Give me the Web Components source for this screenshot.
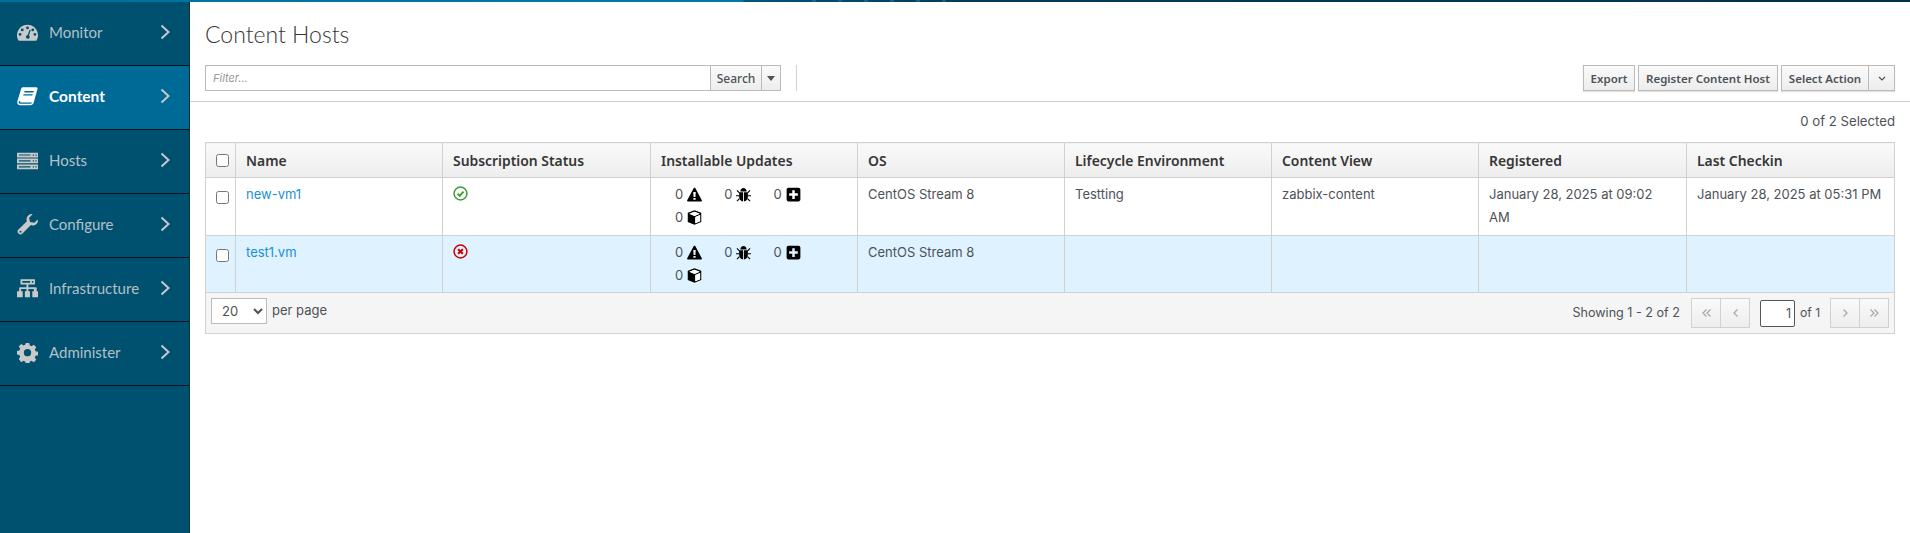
<!DOCTYPE html>
<html>
<head>
<meta charset="utf-8">
<title>Content Hosts</title>
<style>
  html, body { margin: 0; height: 100%; background: #fff; }
  body { font-family: "Inter", "Liberation Sans", sans-serif; color: #363636; overflow: hidden; }
</style>
</head>
<body>
<app-shell>
  <side-nav slot="nav">
    <nav-item icon="gauge" label="Monitor"></nav-item>
    <nav-item icon="book" label="Content" active></nav-item>
    <nav-item icon="server" label="Hosts"></nav-item>
    <nav-item icon="wrench" label="Configure"></nav-item>
    <nav-item icon="sitemap" label="Infrastructure"></nav-item>
    <nav-item icon="cog" label="Administer"></nav-item>
  </side-nav>
  <page-header title-text="Content Hosts"></page-header>
  <selection-count>0 of 2 Selected</selection-count>
  <hosts-table></hosts-table>
</app-shell>

<script>
// icon paths, all on a 24x24 box
const NAV_ICONS = {
  gauge: '<path fill-rule="evenodd" d="M12 3C5.400 3 0 8.400 0 15c0 2.200.6 4.300 1.700 6 .2.300.5.500.9.500h18.800c.4 0 .7-.2.900-.5 1.100-1.700 1.700-3.800 1.700-6 0-6.600-5.400-12-12-12zM12 5.200a1.600 1.600 0 1 1 0 3.200 1.600 1.600 0 0 1 0-3.200zM6 7.400a1.600 1.600 0 1 1 0 3.200 1.600 1.600 0 0 1 0-3.200zM3.500 12.600a1.600 1.600 0 1 1 0 3.200 1.600 1.600 0 0 1 0-3.200zM20.500 12.600a1.600 1.600 0 1 1 0 3.200 1.600 1.600 0 0 1 0-3.200zM18 7.400a1.600 1.600 0 1 1 0 3.200 1.600 1.600 0 0 1 0-3.200zM14.400 8.800l1.300.4-2 6.200c.6.500.9 1.200.8 2-.2 1.200-1.300 2-2.500 1.800-1.200-.2-2-1.300-1.800-2.500.2-1 1-1.700 2-1.800z"/>',
  book: '<path fill-rule="evenodd" d="M7 1.500h15.200c1 0 1.500.9 1.200 1.800l-4.300 15.600c-.6 2-2 3.100-4 3.100H3.600C1.500 22 0 20.500.3 18.100c0-.3.1-.6.2-.9L4.700 3.400C5 2.300 5.900 1.500 7 1.500zM8.700 5.700l-.5 1.600h10.500l.5-1.600zM7.500 9.300l-.5 1.600h10.500l.5-1.600zM3.700 17c-1.300 0-2 .8-1.900 1.700.1.900.8 1.700 2 1.700h11.300c1 0 1.800-.5 2.300-1.700.1-.2.100-.3.200-.5-.5.400-1.100.6-1.800.6H3.700z"/>',
  server: '<path fill-rule="evenodd" d="M0 3h24v5.500H0zM0 9.700h24v5.500H0zM0 16.500h24V22H0zM2 5v1.400h13.500V5zM2 11.700v1.400h13.500v-1.400zM2 18.500v1.400h13.500v-1.400zM18 5v1.500h1.500V5zM21 5v1.500h1.500V5zM18 11.700v1.500h1.500v-1.500zM21 11.700v1.500h1.500v-1.500zM18 18.500V20h1.500v-1.500zM21 18.500V20h1.500v-1.500z"/>',
  wrench: '<path fill-rule="evenodd" d="M23.800 6.300c.3 1.800-.2 3.700-1.600 5.100-1.700 1.700-4.200 2.100-6.300 1.300L6 22.700c-1.100 1.100-2.900 1.100-4 0l-.6-.6c-1.100-1.100-1.100-2.900 0-4l9.900-9.900c-.8-2.100-.4-4.600 1.300-6.300C14 .5 16-.1 17.800.2l-4 4 1 4.800 4.900 1.100zM4 19a1.200 1.200 0 1 0 0 2.400A1.200 1.200 0 0 0 4 19z"/>',
  sitemap: '<path fill-rule="evenodd" d="M4 1.500h16.500v6H13v3h8.500c.6 0 1 .4 1 1V15h1.500v7h-6.500v-7h1.800v-2.300H13V15h1.800v7H9v-7h1.800v-2.300H4.700V15h1.800v7H0v-7h2.500v-3.500c0-.6.400-1 1-1h7.300v-3H4zM6 3.300v2h9v-2zM17 3.300v2h1.700v-2z"/>',
  cog: '<path fill-rule="evenodd" d="M10 1h4l.6 3c.7.200 1.400.5 2 .900l2.600-1.700 2.800 2.800-1.700 2.600c.4.600.7 1.300.9 2l3 .6v4l-3 .6c-.2.700-.5 1.400-.9 2l1.700 2.600-2.800 2.800-2.600-1.700c-.6.400-1.300.7-2 .9l-.6 3h-4l-.6-3c-.7-.2-1.400-.5-2-.9l-2.600 1.700L2 19.400l1.700-2.600c-.4-.6-.7-1.300-.9-2l-3-.6v-4l3-.6c.2-.7.500-1.400.9-2L2 5l2.800-2.800 2.600 1.700c.6-.4 1.300-.7 2-.9zM12 8a4.200 4.200 0 1 0 0 8.400A4.200 4.200 0 0 0 12 8z"/>'
};

const APP_ICONS = {
  warn: '<path fill-rule="evenodd" d="M12 1c.5 0 .9.200 1.200.7l10.500 19.500c.5 1-.1 1.800-1.200 1.800h-21c-1.100 0-1.700-.8-1.200-1.800L10.800 1.700c.3-.5.700-.7 1.200-.7zM10 8l.5 8h3l.5-8zM10.200 17.500v3h3.600v-3z"/>',
  bug: '<path d="M7 7c0-3 2.200-5.500 5-5.500S17 4 17 7zM5.500 8.500h5.800V23C7.500 22.500 5 19.500 5 15.500v-6c0-.3.2-1 .5-1zM12.700 8.500h5.800c.3 0 .5.700.5 1v6c0 4-2.500 7-6.300 7.500z"/><path d="M1.500 5.500 5.500 9.500M22.500 5.500l-4 4M0 14h5M19 14h5M1.500 22.500l4-4M22.500 22.500l-4-4" stroke="#000" stroke-width="1.800" fill="none"/>',
  plus: '<path fill-rule="evenodd" d="M4 1h16c1.700 0 3 1.300 3 3v16c0 1.700-1.300 3-3 3H4c-1.700 0-3-1.300-3-3V4c0-1.700 1.300-3 3-3zM10 5v5H5v4h5v5h4v-5h5v-4h-5V5z"/>',
  cube: '<path fill-rule="evenodd" d="M12 .5l10.800 4v14.600L12 23.500 1.200 19.100V4.500zM12 2.600L3.800 6 12 9.400 20.200 6zM13.300 11v10l7.700-3.200V7.800z" fill="#000"/><path d="M12 2.600 3.800 6 12 9.400 20.200 6zM13.300 11v10l7.700-3.200V7.800z" fill="#fff"/>'
};

// app frame: top strip, side nav and main column
class AppShell extends HTMLElement {
  constructor() {
    super();
    this.attachShadow({ mode: 'open' }).innerHTML = `
<style>
  :host { display: grid; grid-template-columns: 190px 1fr; grid-template-rows: 2px 1fr; height: 100vh; }
  .strip { grid-column: 1 / 3;
    background:
      repeating-linear-gradient(90deg, transparent 0 22px, rgba(30,125,175,.55) 22px 26px) 790px 0 / 160px 100% no-repeat,
      linear-gradient(90deg, #00709c 0, #0079a9 743px, #00557c 744px, #003a58 950px, #00354f 100%); }
  main { min-width: 0; display: flex; flex-direction: column; }
</style>
<div class="strip"></div>
<slot name="nav"></slot>
<main><slot></slot></main>`;
  }
}
customElements.define('app-shell', AppShell);

class SideNav extends HTMLElement {
  constructor() {
    super();
    this.attachShadow({ mode: 'open' }).innerHTML = `
<style>
  :host { display: block; background: #00506f; border-right: 1px solid #1c2b33; box-sizing: border-box; }
</style>
<slot></slot>`;
  }
}
customElements.define('side-nav', SideNav);

class NavItem extends HTMLElement {
  connectedCallback() {
    const icon = NAV_ICONS[this.getAttribute('icon')];
    this.attachShadow({ mode: 'open' }).innerHTML = `
<style>
  :host { display: flex; align-items: center; box-sizing: border-box; height: 64px; padding: 0 19px 3px 17px;
    border-bottom: 1px solid #03131c; font: 400 15px "Lato", sans-serif; color: #b4c1c7; }
  :host([active]) { background: #006a96; color: #fff; font-weight: 700; }
  .icon { width: 21px; height: 21px; fill: #c9c9c9; flex: none; }
  :host([active]) .icon { fill: #fff; }
  .label { margin-left: 11px; flex: 1; }
  :host([active]) .label { font-size: 15.500px; }
  .chev { width: 10px; height: 16px; fill: none; stroke: #c4c9cc; stroke-width: 2; flex: none; }
</style>
<svg class="icon" viewBox="0 0 24 24">${icon}</svg>
<span class="label">${this.getAttribute('label')}</span>
<svg class="chev" viewBox="0 0 10 16"><path d="M1.500 1.500 8.500 8l-7 6.500"/></svg>`;
  }
}
customElements.define('nav-item', NavItem);

class PfButton extends HTMLElement {
  constructor() {
    super();
    this.attachShadow({ mode: 'open' }).innerHTML = `
<style>
  :host { display: inline-flex; align-items: center; justify-content: center; box-sizing: border-box; height: 26px;
    padding: 0 6px; border: 1px solid #bbb; background: linear-gradient(#fafafa, #ededed);
    font: 600 11.500px "Noto Sans", sans-serif; color: #4d5258; white-space: nowrap; }
</style>
<slot></slot>`;
  }
}
customElements.define('pf-button', PfButton);

class PageHeader extends HTMLElement {
  connectedCallback() {
    this.attachShadow({ mode: 'open' }).innerHTML = `
<style>
  :host { display: block; padding: 0 15px; height: 99px; border-bottom: 1px solid #d1d1d1; }
  h1 { margin: 0; padding-top: 20px; height: 63px; box-sizing: border-box; font: 300 23px/24px "Lato", sans-serif; color: #363636; }
  .bar { display: flex; align-items: stretch; height: 26px; }
  .search { display: flex; width: 576px; box-sizing: border-box; border: 1px solid #bbb; }
  .filter { flex: 1; padding-left: 7px; font: italic 400 11px/24px "Inter", sans-serif; color: #999; }
  .search pf-button { border-width: 0 0 0 1px; height: 24px; }
  .sep { width: 1px; background: #d1d1d1; margin-left: 15px; }
  .actions { margin-left: auto; display: flex; gap: 3px; }
  .group { display: flex; }
  .group pf-button + pf-button { border-left: 0; width: 26px; padding: 0; }
  pf-button.raised, .group { box-shadow: 0 1px 1px rgba(3,3,3,.12); }
  .caret { width: 0; height: 0; border: 4px solid transparent; border-top: 5px solid #4d5258; border-bottom: 0; }
  .chev { width: 8px; height: 5px; fill: none; stroke: #4d5258; stroke-width: 1.200; }
</style>
<h1>${this.getAttribute('title-text')}</h1>
<div class="bar">
  <div class="search">
    <div class="filter">Filter...</div>
    <pf-button style="width:51px;font-size:12px;font-weight:500">Search</pf-button>
    <pf-button style="width:19px;padding:0"><span class="caret"></span></pf-button>
  </div>
  <div class="sep"></div>
  <div class="actions">
    <pf-button class="raised" style="width:52px">Export</pf-button>
    <pf-button class="raised" style="width:140px">Register Content Host</pf-button>
    <div class="group">
      <pf-button style="width:88px">Select Action</pf-button>
      <pf-button><svg class="chev" viewBox="0 0 8 5"><path d="M1 1l3 3 3-3"/></svg></pf-button>
    </div>
  </div>
</div>`;
  }
}
customElements.define('page-header', PageHeader);

class SelectionCount extends HTMLElement {
  constructor() {
    super();
    this.attachShadow({ mode: 'open' }).innerHTML = `
<style>
  :host { display: block; height: 40px; padding: 9px 15px 0 0; box-sizing: border-box; text-align: right; font: 400 13.200px/20px "Inter", sans-serif; color: #4d5258; }
</style>
<slot></slot>`;
  }
}
customElements.define('selection-count', SelectionCount);

// one counter with its icon inside the Installable Updates cell
class UpdateCount extends HTMLElement {
  connectedCallback() {
    this.attachShadow({ mode: 'open' }).innerHTML = `
<style>
  :host { display: inline-flex; align-items: center; width: 49.300px; height: 23px; vertical-align: top; }
  span { width: 10px; text-align: center; }
  svg { width: 15px; height: 15px; margin-left: 3px; fill: #000; }
</style>
<span>0</span><svg viewBox="0 0 24 24">${APP_ICONS[this.getAttribute('icon')]}</svg>`;
  }
}
customElements.define('update-count', UpdateCount);

class StatusIcon extends HTMLElement {
  connectedCallback() {
    const ok = this.getAttribute('state') === 'ok';
    const mark = ok
      ? '<path d="M4.300 7.200 6.300 9.200 9.800 5.200" stroke="#3f9c35" stroke-width="1.800" fill="none"/>'
      : '<path d="M4.800 4.800 9.200 9.200M9.200 4.800 4.800 9.200" stroke="#cc0000" stroke-width="2" fill="none"/>';
    this.attachShadow({ mode: 'open' }).innerHTML = `
<style>
  :host { display: block; width: 15px; height: 15px; }
  svg { display: block; width: 15px; height: 15px; }
</style>
<svg viewBox="0 0 14 14"><circle cx="7" cy="7" r="6" fill="none" stroke="${ok ? '#3f9c35' : '#cc0000'}" stroke-width="1.400"/>${mark}</svg>`;
  }
}
customElements.define('status-icon', StatusIcon);

const HOSTS = [
  { name: 'new-vm1', state: 'ok', os: 'CentOS Stream 8', env: 'Testting', view: 'zabbix-content',
    registered: 'January 28, 2025 at 09:02 AM', checkin: 'January 28, 2025 at 05:31 PM' },
  { name: 'test1.vm', state: 'bad', os: 'CentOS Stream 8', env: '', view: '', registered: '', checkin: '', selected: true }
];

class HostsTable extends HTMLElement {
  connectedCallback() {
    const rows = HOSTS.map(h => `
      <tr class="${h.selected ? 'sel' : ''}">
        <td class="chk"><input type="checkbox"></td>
        <td><a href="#">${h.name}</a></td>
        <td><status-icon state="${h.state}"></status-icon></td>
        <td class="upd"><update-count icon="warn"></update-count><update-count icon="bug"></update-count><update-count icon="plus"></update-count><update-count icon="cube"></update-count></td>
        <td>${h.os}</td>
        <td>${h.env}</td>
        <td>${h.view}</td>
        <td class="wrap">${h.registered}</td>
        <td class="nw">${h.checkin}</td>
      </tr>`).join('');

    this.attachShadow({ mode: 'open' }).innerHTML = `
<style>
  :host { display: block; margin: 0 15px; font: 400 13px/23px "Inter", sans-serif; color: #4d5258; }
  table { width: 100%; table-layout: fixed; border-collapse: collapse; }
  th, td { border: 1px solid #d1d1d1; text-align: left; vertical-align: top; }
  th { height: 34px; padding: 0 10px; vertical-align: middle; background: linear-gradient(#fafafa, #ededed);
    font: 600 13.900px "Noto Sans", sans-serif; color: #363636; }
  td { padding: 5px 10px 6px; line-height: 23px; height: 46px; box-sizing: content-box; }
  tr.sel td { background: #def3ff; padding-bottom: 5px; }
  td > status-icon { margin-top: 3px; }
  td.chk { padding: 0 0 0 5px; }
  th.chk { padding: 0 0 0 5px; }
  input[type=checkbox] { width: 13px; height: 13px; margin: 13px 0 0 5px; display: block; }
  th input[type=checkbox] { margin-top: 0; }
  a { color: #1b8fd6; text-decoration: none; }
  .upd { padding-left: 23px; padding-right: 0; }
  .wrap { padding-right: 22px; }
  .nw { white-space: nowrap; padding-right: 0; }
  .foot { display: flex; align-items: flex-start; height: 41px; box-sizing: border-box; padding: 5px 5px 0;
    background: #f5f5f5; border: 1px solid #d1d1d1; border-top: 0; }
  select { width: 56px; height: 26px; font: 400 13px "Inter", sans-serif; color: #4d5258; background: #fff; border: 1px solid #bbb; padding-left: 6px; }
  .per { margin-left: 5px; line-height: 24px; }
  .show { margin-left: auto; line-height: 30px; font-size: 12.600px; }
  .pager { display: flex; height: 30px; border: 1px solid #d1d1d1; box-sizing: border-box; background: linear-gradient(#fafafa, #ededed); }
  .pager span { width: 28px; display: flex; align-items: center; justify-content: center; }
  .pager span + span { border-left: 1px solid #d1d1d1; }
  .pager svg { height: 8px; fill: none; stroke: #a3a6a9; stroke-width: 1.200; }
  .num { width: 35px; height: 27px; box-sizing: border-box; border: 1px solid #555; border-radius: 2px; margin: 2px 0 0 10px; background: #fff; text-align: right; padding-right: 3px; line-height: 25px; font-size: 12.600px; }
  .of { width: 20px; margin: 0 10px 0 5px; line-height: 30px; font-size: 12.200px; white-space: nowrap; }
</style>
<table>
  <colgroup>
    <col style="width:30px"><col style="width:207px"><col style="width:208px"><col style="width:207px">
    <col style="width:207px"><col style="width:207px"><col style="width:207px"><col style="width:208px"><col style="width:208px">
  </colgroup>
  <thead>
    <tr>
      <th class="chk"><input type="checkbox"></th>
      <th>Name</th><th>Subscription Status</th><th>Installable Updates</th><th>OS</th>
      <th>Lifecycle Environment</th><th>Content View</th><th>Registered</th><th>Last Checkin</th>
    </tr>
  </thead>
  <tbody>${rows}</tbody>
</table>
<div class="foot">
  <select><option>20</option></select>
  <span class="per">per page</span>
  <span class="show">Showing 1 - 2 of 2</span>
  <div class="pager" style="margin-left:11px">
    <span><svg viewBox="0 0 9 8" width="9"><path d="M4.500.5 1 4l3.500 3.500M8.500.5 5 4l3.500 3.500"/></svg></span>
    <span><svg viewBox="0 0 5 8" width="5"><path d="M4.500.5 1 4l3.500 3.500"/></svg></span>
  </div>
  <div class="num">1</div>
  <span class="of">of 1</span>
  <div class="pager">
    <span><svg viewBox="0 0 5 8" width="5"><path d="M.5.5 4 4 .5 7.500"/></svg></span>
    <span><svg viewBox="0 0 9 8" width="9"><path d="M.5.5 4 4 .5 7.500M4.500.5 8 4 4.500 7.500"/></svg></span>
  </div>
</div>`;
  }
}
customElements.define('hosts-table', HostsTable);
</script>
</body>
</html>
